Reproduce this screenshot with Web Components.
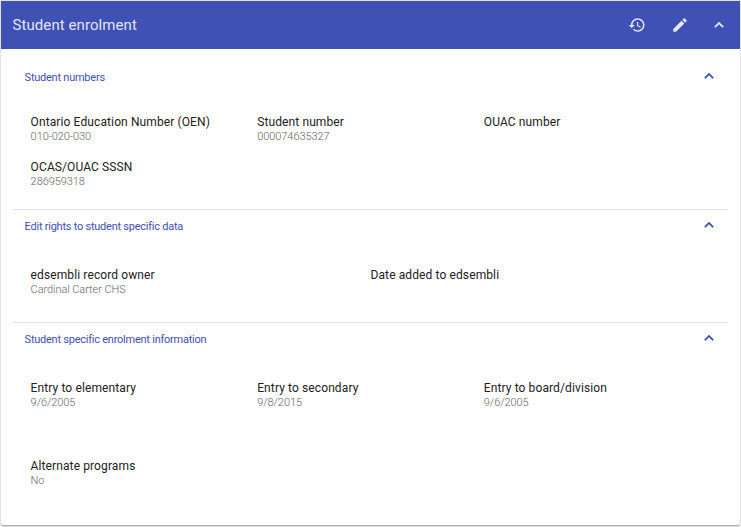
<!DOCTYPE html>
<html lang="en">
<head>
<meta charset="utf-8">
<title>Student enrolment</title>
<style>
html { background: #fff; }
body { margin: 0; height: 527px; overflow: hidden; font-family: Roboto, "Liberation Sans", sans-serif; }
</style>
</head>
<body>
<enrol-card heading="Student enrolment">
  <enrol-section heading="Student numbers" style="--h:149px; --top:51px; --pitch:45px">
    <enrol-field label="Ontario Education Number (OEN)">010-020-030</enrol-field>
    <enrol-field label="Student number">000074635327</enrol-field>
    <enrol-field label="OUAC number"></enrol-field>
    <enrol-field label="OCAS/OUAC SSSN">286959318</enrol-field>
  </enrol-section>
  <enrol-section heading="Edit rights to student specific data" style="--h:113px; --top:55px; --cols:2">
    <enrol-field label="edsembli record owner">Cardinal Carter CHS</enrol-field>
    <enrol-field label="Date added to edsembli"></enrol-field>
  </enrol-section>
  <enrol-section heading="Student specific enrolment information" style="--h:190px; --top:55px; --pitch:78px; --line:transparent">
    <enrol-field label="Entry to elementary">9/6/2005</enrol-field>
    <enrol-field label="Entry to secondary">9/8/2015</enrol-field>
    <enrol-field label="Entry to board/division">9/6/2005</enrol-field>
    <enrol-field label="Alternate programs">No</enrol-field>
  </enrol-section>
</enrol-card>
<script>
const PATHS = {
  history: 'M13 3c-4.97 0-9 4.03-9 9H1l3.89 3.89.07.14L9 12H6c0-3.87 3.13-7 7-7s7 3.13 7 7-3.13 7-7 7c-1.93 0-3.68-.79-4.94-2.06l-1.42 1.42C8.27 19.99 10.51 21 13 21c4.97 0 9-4.03 9-9s-4.03-9-9-9zm-1 5v5l4.28 2.54.72-1.21-3.5-2.08V8H12z',
  edit: 'M3 17.25V21h3.75L17.81 9.94l-3.75-3.75L3 17.25zM20.71 7.04a1 1 0 0 0 0-1.41l-2.34-2.34a1 1 0 0 0-1.41 0l-1.83 1.83 3.75 3.75 1.83-1.83z',
  less: 'M12 8l-6 6 1.41 1.41L12 10.83l4.59 4.58L18 14z'
};

class MdIcon extends HTMLElement {
  connectedCallback() {
    this.attachShadow({ mode: 'open' }).innerHTML = `
      <style>
        :host { display: block; width: var(--size, 18px); height: var(--size, 18px); }
        svg { display: block; width: 100%; height: 100%; fill: currentColor; stroke: currentColor; stroke-width: var(--bold, 0); }
      </style>
      <svg viewBox="0 0 24 24"><path d="${PATHS[this.getAttribute('name')]}"/></svg>`;
  }
}

class EnrolField extends HTMLElement {
  connectedCallback() {
    this.attachShadow({ mode: 'open' }).innerHTML = `
      <style>
        :host { display: block; white-space: nowrap; }
        .label { font-size: 12px; line-height: 16px; letter-spacing: .11px; color: #212121; }
        .value { font-size: 11px; font-weight: 300; line-height: 13px; letter-spacing: -.07px; color: #666; }
      </style>
      <div class="label">${this.getAttribute('label')}</div>
      <div class="value"><slot></slot></div>`;
  }
}

class EnrolSection extends HTMLElement {
  connectedCallback() {
    this.attachShadow({ mode: 'open' }).innerHTML = `
      <style>
        :host { display: block; box-sizing: border-box; height: var(--h); margin: 0 12px; border-bottom: 1px solid var(--line, #e2e2e2); }
        header { display: flex; justify-content: space-between; align-items: center; box-sizing: border-box; height: 34px; padding: 0 10px 2px 11.6px; color: #3f51b5; font-size: 11px; letter-spacing: -.24px; }
        md-icon { --bold: .7; margin-bottom: 2px; }
        .grid { display: grid; grid-template-columns: repeat(var(--cols, 3), 1fr); grid-auto-rows: var(--pitch, 45px); padding: 0 0 0 17.6px; margin: calc(var(--top) - 34px + 2px) 17.6px 0 0; }
      </style>
      <header><span>${this.getAttribute('heading')}</span><md-icon name="less"></md-icon></header>
      <div class="grid"><slot></slot></div>`;
  }
}

class EnrolCard extends HTMLElement {
  connectedCallback() {
    this.attachShadow({ mode: 'open' }).innerHTML = `
      <style>
        :host { display: block; box-sizing: border-box; height: 524px; margin: 1px 1px 0; background: #fff; border-radius: 0 0 2px 2px; box-shadow: 0 1px 0 0 #adadad, 0 0 0 1px #e3e3e3, 0 2px 0 0 #e0e0e0; }
        .bar { display: flex; align-items: center; box-sizing: border-box; height: 48px; padding: 0 12px 0 11.5px; background: #3f51b5; color: rgba(255,255,255,.87); font-size: 15px; letter-spacing: .08px; }
        .bar span { flex: 1; }
        .actions { display: flex; align-items: center; }
        .body { padding-top: 12px; }
      </style>
      <div class="bar">
        <span>${this.getAttribute('heading')}</span>
        <div class="actions">
          <md-icon name="history" style="margin-right:25px"></md-icon>
          <md-icon name="edit" style="margin-right:21px"></md-icon>
          <md-icon name="less" style="--bold:.6"></md-icon>
        </div>
      </div>
      <div class="body"><slot></slot></div>`;
  }
}

customElements.define('md-icon', MdIcon);
customElements.define('enrol-field', EnrolField);
customElements.define('enrol-section', EnrolSection);
customElements.define('enrol-card', EnrolCard);
</script>
</body>
</html>
